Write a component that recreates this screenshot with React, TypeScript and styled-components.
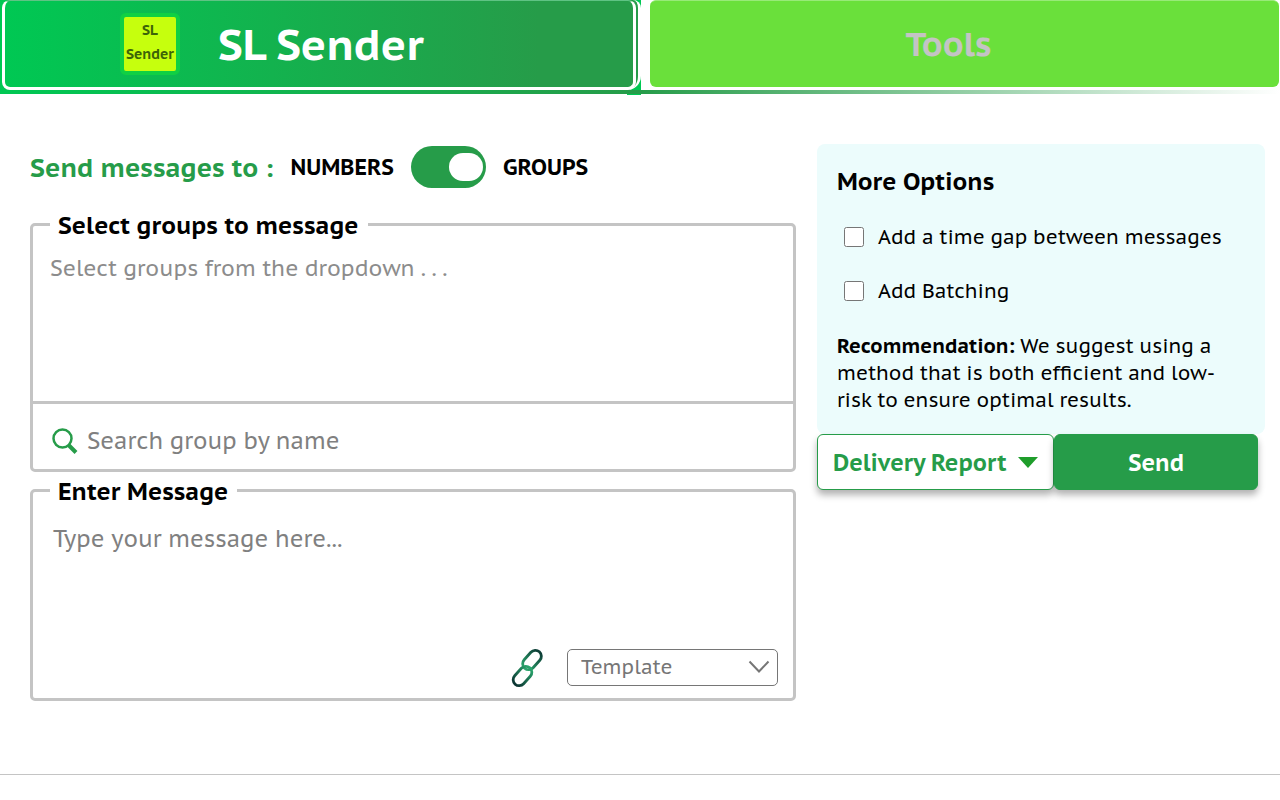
import React from "react";
import styled, { createGlobalStyle } from "styled-components";

const GREEN = "#269c49";
const BRIGHT = "#00c853";
const LINE = "#c4c4c4";

const GlobalStyle = createGlobalStyle`
  * { box-sizing: border-box; }
  body {
    margin: 0;
    background: #fff;
    color: #000;
    font-family: "PT Sans Caption", "Noto Sans", "Open Sans", sans-serif;
  }
  button, input, select, textarea { font-family: inherit; }
`;

const Header = styled.header`
  display: grid;
  grid-template-columns: 641fr 639fr;
  align-items: start;
`;

const ActiveSide = styled.div`
  padding-bottom: 1px;
  background: linear-gradient(${BRIGHT}, ${BRIGHT}) right / 14px 100% no-repeat;
`;

const ActiveFrame = styled.div`
  height: 90px;
  padding: 0 2px;
  border-right: 3px solid #fff;
  border-radius: 0 8px 14px 0;
  background: linear-gradient(to right, ${BRIGHT}, ${GREEN});
`;

const ActiveTab = styled.button`
  display: flex;
  align-items: center;
  gap: 38px;
  width: 100%;
  height: 90px;
  padding: 0 0 0 115px;
  border: 3px solid #fff;
  border-top-width: 1px;
  border-top-color: #5fc384;
  border-radius: 8px;
  background: linear-gradient(to right, ${BRIGHT}, ${GREEN} 85%);
  background-clip: padding-box;
  color: #fff;
  font-size: 43px;
  font-weight: 600;
  line-height: 60px;
`;

const Logo = styled.span`
  display: flex;
  flex-direction: column;
  align-items: center;
  justify-content: center;
  width: 60px;
  height: 62px;
  padding-bottom: 4px;
  border: 4px solid #10d043;
  border-radius: 6px;
  background: #c6ff0d;
  color: #3c6408;
  font-size: 14px;
  font-weight: 700;
  line-height: 24px;
`;

const ToolsSide = styled.div`
  padding: 0 1px 3px 9px;
`;

const ToolsTab = styled.button`
  display: block;
  width: 100%;
  height: 87px;
  padding: 0 32px 2px 0;
  border: 0;
  border-top: 1px solid #98ea78;
  border-radius: 6px;
  background: #6ae03b;
  color: #c4c4c4;
  font-size: 34px;
  font-weight: 700;
`;

const HeaderLine = styled.div<{ $fade?: boolean }>`
  height: 4px;
  background: linear-gradient(
    to right,
    ${(p) => (p.$fade ? `${GREEN}, #fff` : `${BRIGHT}, ${GREEN}`)}
  );
`;

const Main = styled.main`
  display: grid;
  grid-template-columns: minmax(0, 766fr) minmax(0, 448fr);
  gap: 21px;
  align-items: start;
  padding: 49px 15px 73px 30px;
  border-bottom: 1px solid ${LINE};
`;

const Column = styled.div`
  display: flex;
  flex-direction: column;
`;

const TargetRow = styled.div`
  display: flex;
  align-items: center;
  gap: 17px;
  height: 46px;
  margin-bottom: 16px;
`;

const TargetTitle = styled.span`
  color: ${GREEN};
  font-size: 26px;
  font-weight: 600;
`;

const TargetName = styled.span`
  font-size: 22px;
  font-weight: 600;
`;

const Switch = styled.input`
  appearance: none;
  display: flex;
  align-items: center;
  width: 75px;
  height: 42px;
  margin: 0;
  padding: 0 3px;
  border-radius: 21px;
  background: ${GREEN};
  &::before {
    content: "";
    width: 34px;
    height: 28px;
    border-radius: 14px;
    background: #fff;
  }
  &:checked { justify-content: flex-end; }
`;

const Panel = styled.fieldset`
  display: flex;
  flex-direction: column;
  min-width: 0;
  margin: 0;
  padding: 0;
  border: 3px solid ${LINE};
  border-radius: 5px;
`;

const PanelTitle = styled.legend`
  margin-left: 17px;
  padding: 4px 9px 0 8px;
  font-size: 24px;
  font-weight: 600;
  line-height: 32px;
`;

const GroupList = styled.div`
  height: 159px;
  padding: 10px 17px;
  color: #8c8c8c;
  font-size: 22px;
  line-height: 32px;
`;

const SearchRow = styled.label`
  display: flex;
  align-items: center;
  gap: 9px;
  height: 68px;
  padding: 8px 17px 0 19px;
  border-top: 3px solid ${LINE};
`;

const TextField = styled.input`
  flex: 1;
  min-width: 0;
  padding: 0;
  border: 0;
  outline: 0;
  font-size: 23px;
  &::placeholder { color: #808080; }
`;

const MessageField = styled.textarea`
  display: block;
  height: 138px;
  padding: 15px 20px;
  border: 0;
  outline: 0;
  resize: none;
  font-size: 23px;
  line-height: 32px;
  &::placeholder { color: #808080; }
`;

const MessageTools = styled.div`
  display: flex;
  align-items: center;
  justify-content: flex-end;
  gap: 23px;
  padding: 0 15px 10px;
`;

const IconButton = styled.button`
  display: flex;
  padding: 0;
  border: 0;
  background: none;
`;

const SelectBox = styled.span`
  display: grid;
  align-items: center;
  width: 211px;
  & > * { grid-area: 1 / 1; }
  & > svg { justify-self: end; margin-right: 8px; pointer-events: none; }
`;

const Select = styled.select`
  appearance: none;
  width: 100%;
  height: 37px;
  padding: 0 13px;
  border: 1px solid #767676;
  border-radius: 5px;
  background: #fff;
  color: #767676;
  font-size: 20px;
`;

const Options = styled.section`
  padding: 22px 20px 20px;
  border-radius: 8px;
  background: #ecfcfc;
  font-size: 20px;
`;

const OptionsTitle = styled.h2`
  margin: 0 0 23px;
  font-size: 24px;
  font-weight: 600;
  line-height: 32px;
`;

const Option = styled.label`
  display: flex;
  align-items: center;
  gap: 14px;
  height: 32px;
  margin: 0 0 22px 7px;
  white-space: nowrap;
`;

const CheckBox = styled.input`
  flex: none;
  width: 20px;
  height: 20px;
  margin: 0;
`;

const Advice = styled.p`
  margin: 26px 0 0;
  line-height: 27px;
`;

const Strong = styled.strong`
  font-weight: 600;
`;

const Actions = styled.div`
  display: grid;
  grid-template-columns: 238fr 204fr;
  padding-right: 7px;
`;

const ActionButton = styled.button<{ $filled?: boolean }>`
  display: flex;
  align-items: center;
  justify-content: center;
  gap: 12px;
  height: 56px;
  padding: 0;
  border: 1px solid ${GREEN};
  border-radius: 6px;
  background: ${(p) => (p.$filled ? GREEN : "#fff")};
  color: ${(p) => (p.$filled ? "#fff" : GREEN)};
  box-shadow: 0 5px 7px rgba(0, 0, 0, 0.3);
  font-size: 23px;
  font-weight: 600;
  white-space: nowrap;
`;

export default function App() {
  return (
    <>
      <GlobalStyle />
      <Header>
        <ActiveSide>
          <ActiveFrame>
            <ActiveTab type="button">
              <Logo>
                <span>SL</span>
                <span>Sender</span>
              </Logo>
              SL Sender
            </ActiveTab>
          </ActiveFrame>
          <HeaderLine />
        </ActiveSide>
        <div>
          <ToolsSide>
            <ToolsTab type="button">Tools</ToolsTab>
          </ToolsSide>
          <HeaderLine $fade />
        </div>
      </Header>
      <Main>
        <Column>
          <TargetRow>
            <TargetTitle>Send messages to :</TargetTitle>
            <TargetName>NUMBERS</TargetName>
            <Switch type="checkbox" role="switch" aria-label="Send to groups" defaultChecked />
            <TargetName>GROUPS</TargetName>
          </TargetRow>
          <Panel>
            <PanelTitle>Select groups to message</PanelTitle>
            <GroupList>Select groups from the dropdown . . .</GroupList>
            <SearchRow>
              <svg width="26" height="26" viewBox="0 0 26 26" fill="none" stroke={GREEN}>
                <circle cx="10.5" cy="10.5" r="9" strokeWidth="2.5" />
                <path d="M16.5 17 24 24.5" strokeWidth="4" />
              </svg>
              <TextField type="text" aria-label="Search group by name" placeholder="Search group by name" />
            </SearchRow>
          </Panel>
          <Panel>
            <PanelTitle>Enter Message</PanelTitle>
            <MessageField aria-label="Message" placeholder="Type your message here..." />
            <MessageTools>
              <IconButton type="button" aria-label="Attach">
                <svg width="34" height="42" viewBox="0 0 34 42" fill="none" strokeWidth="2.8">
                  <defs>
                    <linearGradient id="upper" x1="1" y1="0" x2="0" y2="0">
                      <stop offset="0" stopColor="#0d3d36" />
                      <stop offset="1" stopColor="#2aa56c" />
                    </linearGradient>
                    <linearGradient id="lower" x1="0" y1="0" x2="1" y2="0">
                      <stop offset="0" stopColor="#0b3532" />
                      <stop offset="1" stopColor="#2aa56c" />
                    </linearGradient>
                  </defs>
                  <rect x="-11" y="-6" width="22" height="12" rx="6" stroke="url(#upper)" transform="translate(22 14) rotate(-48)" />
                  <rect x="-11" y="-6" width="22" height="12" rx="6" stroke="url(#lower)" transform="translate(12.5 30) rotate(-48)" />
                </svg>
              </IconButton>
              <SelectBox>
                <Select aria-label="Template" defaultValue="">
                  <option value="">Template</option>
                </Select>
                <svg width="22" height="14" viewBox="0 0 22 14" fill="none" stroke="#767676" strokeWidth="2">
                  <path d="M1.5 1.5 11 11.5 20.5 1.5" />
                </svg>
              </SelectBox>
            </MessageTools>
          </Panel>
        </Column>
        <Column>
          <Options>
            <OptionsTitle>More Options</OptionsTitle>
            <Option>
              <CheckBox type="checkbox" />
              Add a time gap between messages
            </Option>
            <Option>
              <CheckBox type="checkbox" />
              Add Batching
            </Option>
            <Advice>
              <Strong>Recommendation:</Strong> We suggest using a method that is both efficient and low-risk to
              ensure optimal results.
            </Advice>
          </Options>
          <Actions>
            <ActionButton type="button">
              Delivery Report
              <svg width="20" height="11" viewBox="0 0 20 11" fill="#1f9d2b">
                <path d="M0 0H20L10 11Z" />
              </svg>
            </ActionButton>
            <ActionButton type="button" $filled>
              Send
            </ActionButton>
          </Actions>
        </Column>
      </Main>
    </>
  );
}
